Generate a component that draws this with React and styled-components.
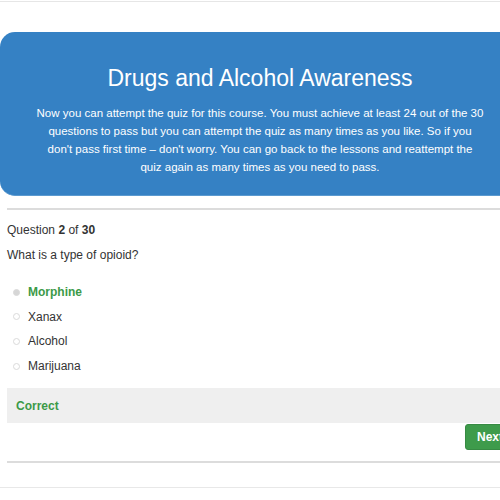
import React from "react";
import styled, { createGlobalStyle } from "styled-components";

const GlobalStyle = createGlobalStyle`
    html, body {
        margin: 0;
        padding: 0;
        background: #fff;
        overflow: hidden;
    }
    body {
        font-family: "Liberation Sans", Arial, sans-serif;
        color: #333;
    }
`

const Page = styled.div`
    width: 500px;
    height: 500px;
    overflow: hidden;
    position: relative;
`

const Wrap = styled.div`
    width: 520px;
    border-top: 1px solid #e6e6e6;
    margin-top: 1px;
`

const Banner = styled.section`
    margin-top: 30px;
    height: 164px;
    box-sizing: border-box;
    background: #3581c4;
    border-radius: 15px;
    border-bottom: 1px solid #5b9ad0;
    color: #fff;
    text-align: center;
    padding: 32px 36px 0;
`

const Title = styled.h1`
    font-size: 23px;
    font-weight: 400;
    margin: 0 0 12px;
    line-height: 28px;
`

const Intro = styled.p`
    font-size: 11.5px;
    line-height: 18px;
    margin: 0;
`

const Quiz = styled.div`
    padding: 0 0 0 7px;
`

const Rule = styled.hr`
    border: 0;
    border-top: 2px solid #dcdcdc;
    margin: ${(p) => p.$m || "0"};
`

const Counter = styled.div`
    font-size: 12px;
    line-height: 16px;
    margin-top: 12px;

    b {
        font-weight: 700;
    }
`

const Prompt = styled.div`
    font-size: 12px;
    line-height: 16px;
    margin-top: 9px;
`

const Options = styled.ul`
    list-style: none;
    margin: 21px 0 0;
    padding: 0;
    display: flex;
    flex-direction: column;
    gap: 8.7px;
`

const Option = styled.li`
    display: flex;
    align-items: center;
    gap: 8px;
    padding-left: 6px;
    height: 16px;
    font-size: 12px;
    color: ${(p) => (p.$correct ? "#3c9a48" : "#333")};
    font-weight: ${(p) => (p.$correct ? 700 : 400)};
`

const Radio = styled.span`
    width: 7px;
    height: 7px;
    border-radius: 50%;
    border: 1px solid #dadada;
    background: ${(p) => (p.$checked ? "#d6d6d6" : "#fff")};
    box-sizing: border-box;
`

const Feedback = styled.div`
    margin-top: 14px;
    height: 35px;
    background: #efefef;
    display: flex;
    align-items: center;
    padding-left: 9px;
    font-size: 12px;
    font-weight: 700;
    color: #3c9a48;
`

const Actions = styled.div`
    display: flex;
    justify-content: flex-start;
    padding-left: 458px;
    height: 38px;
`

const NextButton = styled.button`
    height: 26px;
    margin-top: 1px;
    padding: 0 14px 0 11px;
    background: #3e9b4b;
    border: 1px solid #378a43;
    border-radius: 3px;
    color: #fff;
    font-family: inherit;
    font-size: 12px;
    font-weight: 700;
`

const Bottom = styled.div`
    margin-top: 24px;
    border-top: 1px solid #e8e8e8;
`

const options = [
    { label: "Morphine", correct: true },
    { label: "Xanax" },
    { label: "Alcohol" },
    { label: "Marijuana" },
];

const App = () => {
    return (
        <Page>
            <GlobalStyle />
            <Wrap>
                <Banner>
                    <Title>Drugs and Alcohol Awareness</Title>
                    <Intro>
                        Now you can attempt the quiz for this course. You must achieve at least 24 out of the 30
                        questions to pass but you can attempt the quiz as many times as you like. So if you
                        don't pass first time – don't worry. You can go back to the lessons and reattempt the
                        quiz again as many times as you need to pass.
                    </Intro>
                </Banner>
                <Quiz>
                    <Rule $m="12px 0 0" />
                    <Counter>
                        Question <b>2</b> of <b>30</b>
                    </Counter>
                    <Prompt>What is a type of opioid?</Prompt>
                    <Options>
                        {options.map((o) => (
                            <Option key={o.label} $correct={o.correct}>
                                <Radio $checked={o.correct} />
                                {o.label}
                            </Option>
                        ))}
                    </Options>
                    <Feedback>Correct</Feedback>
                    <Actions>
                        <NextButton>Next</NextButton>
                    </Actions>
                    <Rule />
                </Quiz>
                <Bottom />
            </Wrap>
        </Page>
    );
};

export default App;
